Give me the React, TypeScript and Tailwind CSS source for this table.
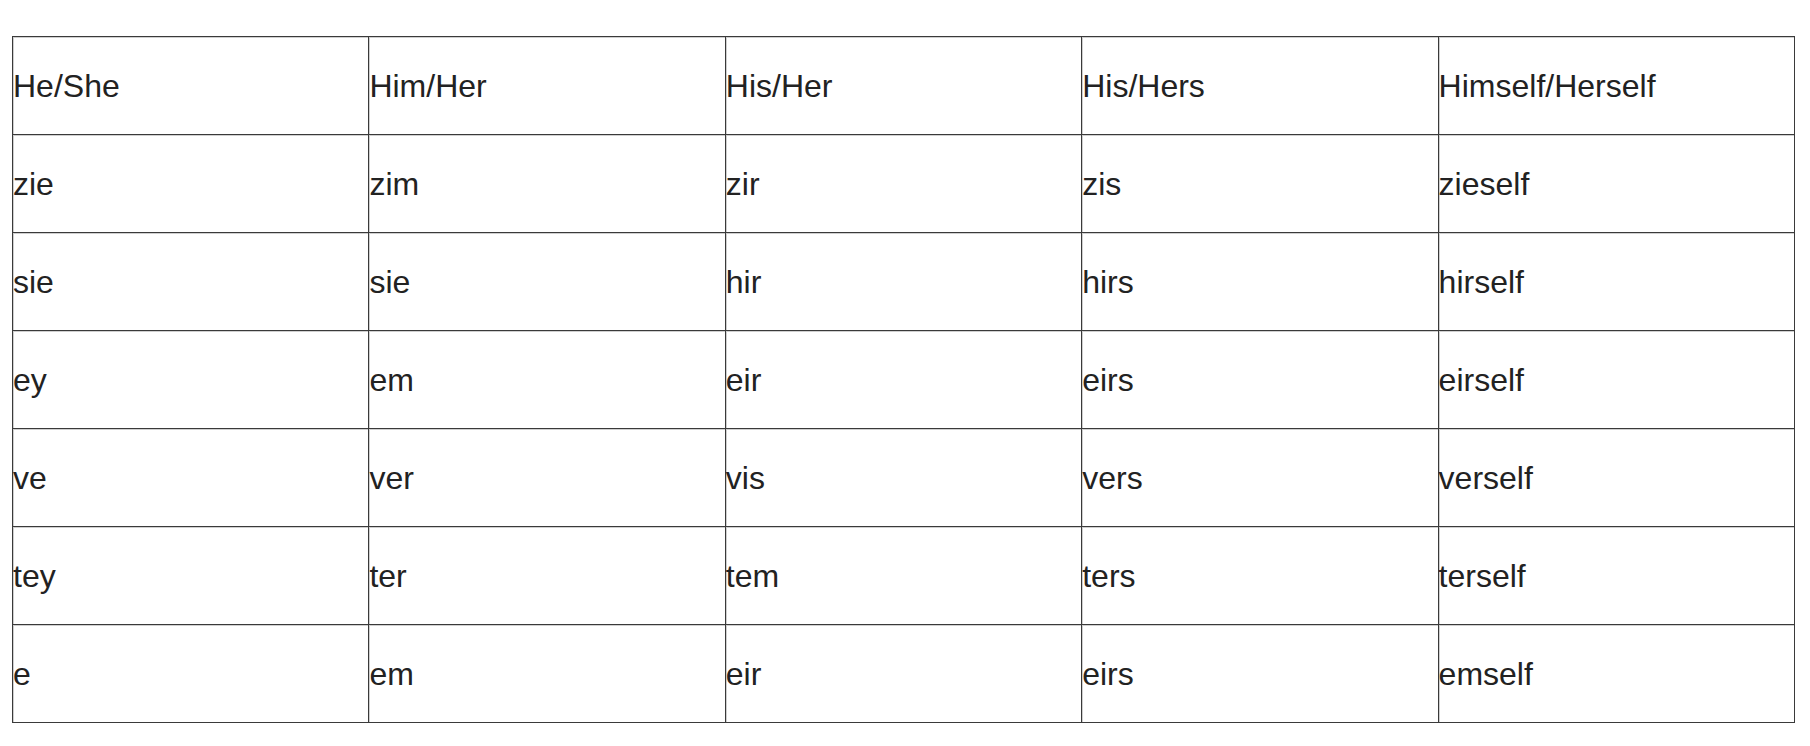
import React from "react";

const rows: string[][] = [
  ["He/She", "Him/Her", "His/Her", "His/Hers", "Himself/Herself"],
  ["zie", "zim", "zir", "zis", "zieself"],
  ["sie", "sie", "hir", "hirs", "hirself"],
  ["ey", "em", "eir", "eirs", "eirself"],
  ["ve", "ver", "vis", "vers", "verself"],
  ["tey", "ter", "tem", "ters", "terself"],
  ["e", "em", "eir", "eirs", "emself"],
];

export default function App() {
  return (
    <div className="min-h-[746px] w-[1810px] bg-white pt-[36px] pl-[12px]">
      <div
        className="grid w-[1783px] grid-cols-5 border-l border-t border-[#3a3a3a] text-[32px] leading-none text-[#222]"
        style={{ fontFamily: '"Liberation Sans", Arial, sans-serif' }}
      >
        {rows.flatMap((row, r) =>
          row.map((cell, c) => (
            <div
              key={`${r}-${c}`}
              className="flex h-[98px] items-center border-b border-r border-[#3a3a3a] shadow-[inset_1px_1px_0_#cfcfcf]"
            >
              {cell}
            </div>
          ))
        )}
      </div>
    </div>
  );
}
